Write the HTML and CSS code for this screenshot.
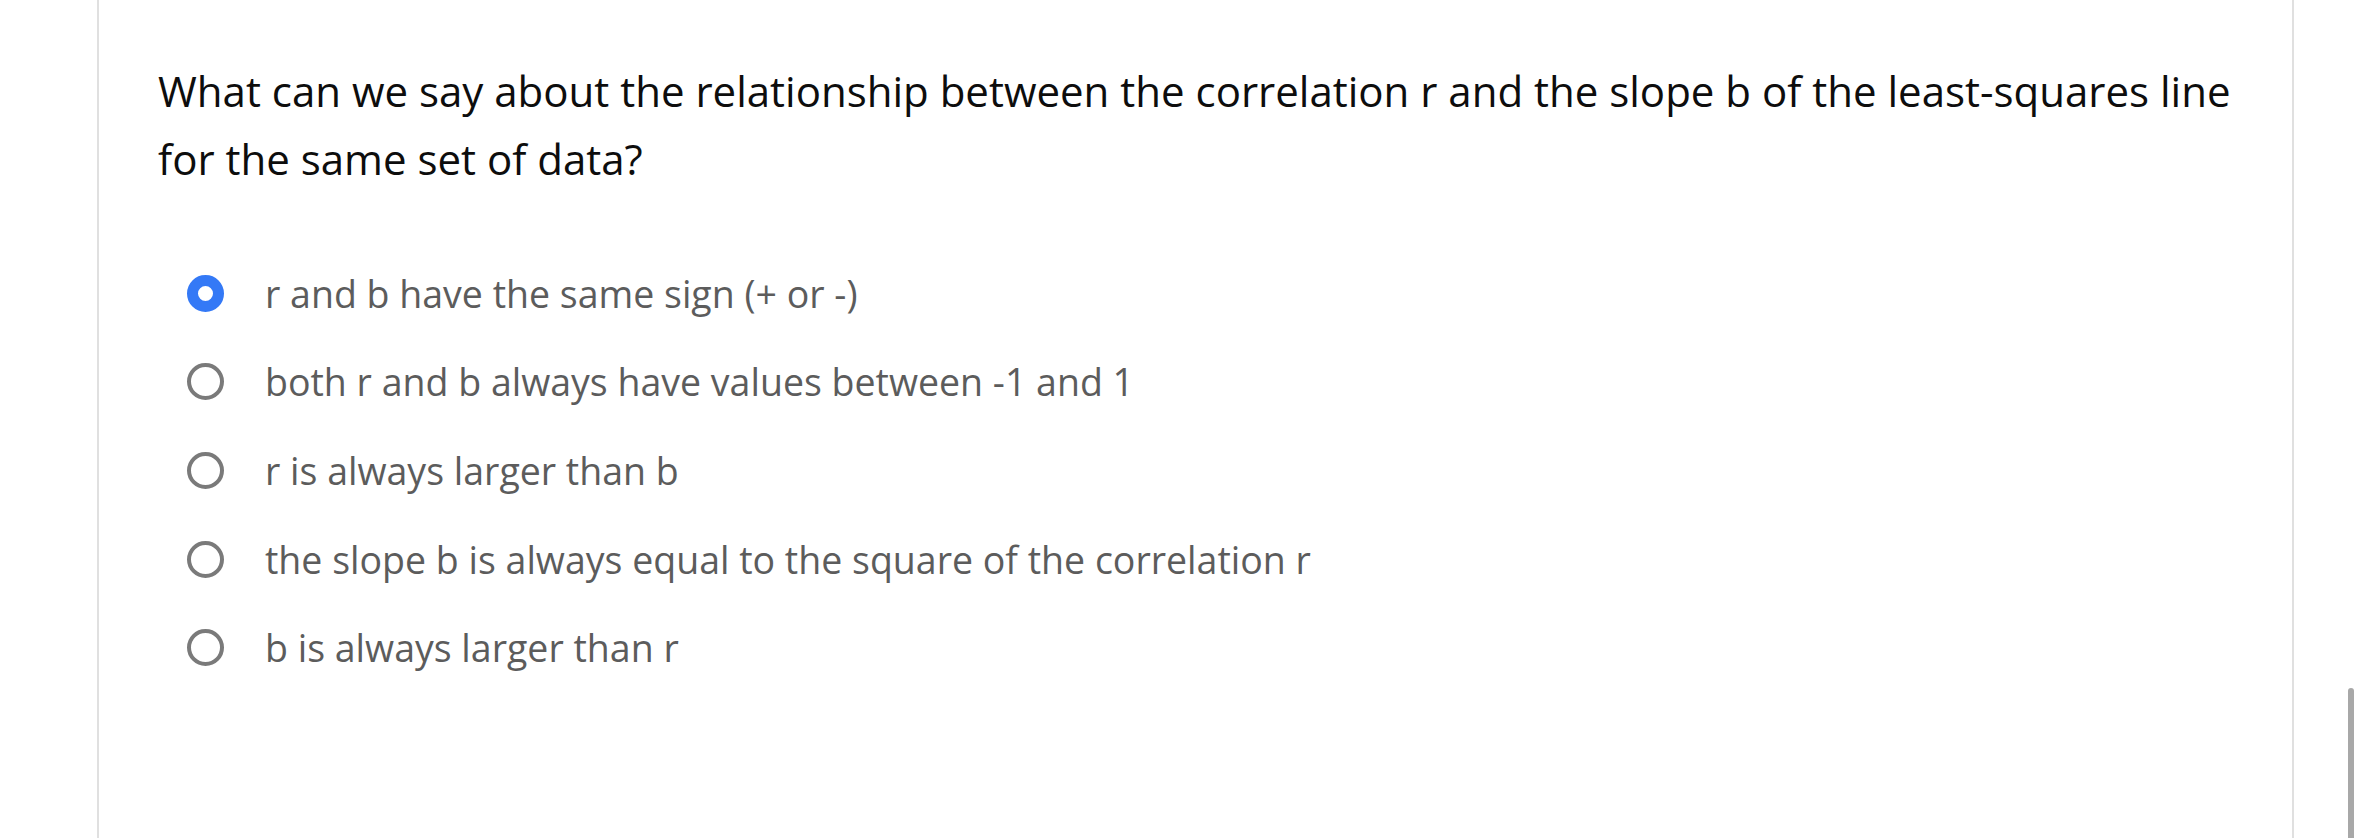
FILE: index.html
```html
<!DOCTYPE html>
<html lang="en">
<head>
<meta charset="utf-8">
<title>Question</title>
<link rel="stylesheet" href="styles.css">
</head>
<body>
<div class="page">
  <div class="card">
    <p class="question">What can we say about the relationship between the correlation r and the slope b of the least-squares line for the same set of data?</p>
    <ul class="options">
      <li class="option selected"><span class="radio"></span><span class="label">r and b have the same sign (+ or -)</span></li>
      <li class="option"><span class="radio"></span><span class="label">both r and b always have values between -1 and 1</span></li>
      <li class="option"><span class="radio"></span><span class="label">r is always larger than b</span></li>
      <li class="option"><span class="radio"></span><span class="label">the slope b is always equal to the square of the correlation r</span></li>
      <li class="option"><span class="radio"></span><span class="label">b is always larger than r</span></li>
    </ul>
  </div>
  <div class="scrollbar"></div>
</div>
</body>
</html>
```
FILE: styles.css
```css
html, body {
  margin: 0;
  padding: 0;
  background: #ffffff;
  height: 100%;
  overflow: hidden;
}
.page {
  position: relative;
  height: 838px;
  overflow: hidden;
  display: flex;
  font-family: "Open Sans", "Noto Sans", sans-serif;
}
.card {
  margin-left: 97px;
  width: 2197px;
  height: 838px;
  border-left: 2px solid #e0e0e0;
  border-right: 2px solid #e0e0e0;
  padding: 57px 0 0 59px;
  box-sizing: border-box;
  flex: none;
}
.question {
  margin: 0;
  font-size: 42px;
  line-height: 68px;
  color: #0d0d0d;
  width: 2095px;
}
.options {
  list-style: none;
  margin: 56px 0 0 0;
  padding: 0 0 0 29px;
}
.option {
  display: flex;
  align-items: center;
  height: 88.6px;
}
.radio {
  width: 29px;
  height: 29px;
  border: 4px solid #7a7a7a;
  border-radius: 50%;
  flex: none;
}
.option.selected .radio {
  width: 15px;
  height: 15px;
  border: 11px solid #3479f6;
}
.label {
  margin-left: 41px;
  font-size: 37.5px;
  color: #5c5c5c;
}
.scrollbar {
  position: absolute;
  left: 2348px;
  top: 688px;
  width: 6px;
  height: 160px;
  background: #a8a8a8;
  border-radius: 3px;
}
```
